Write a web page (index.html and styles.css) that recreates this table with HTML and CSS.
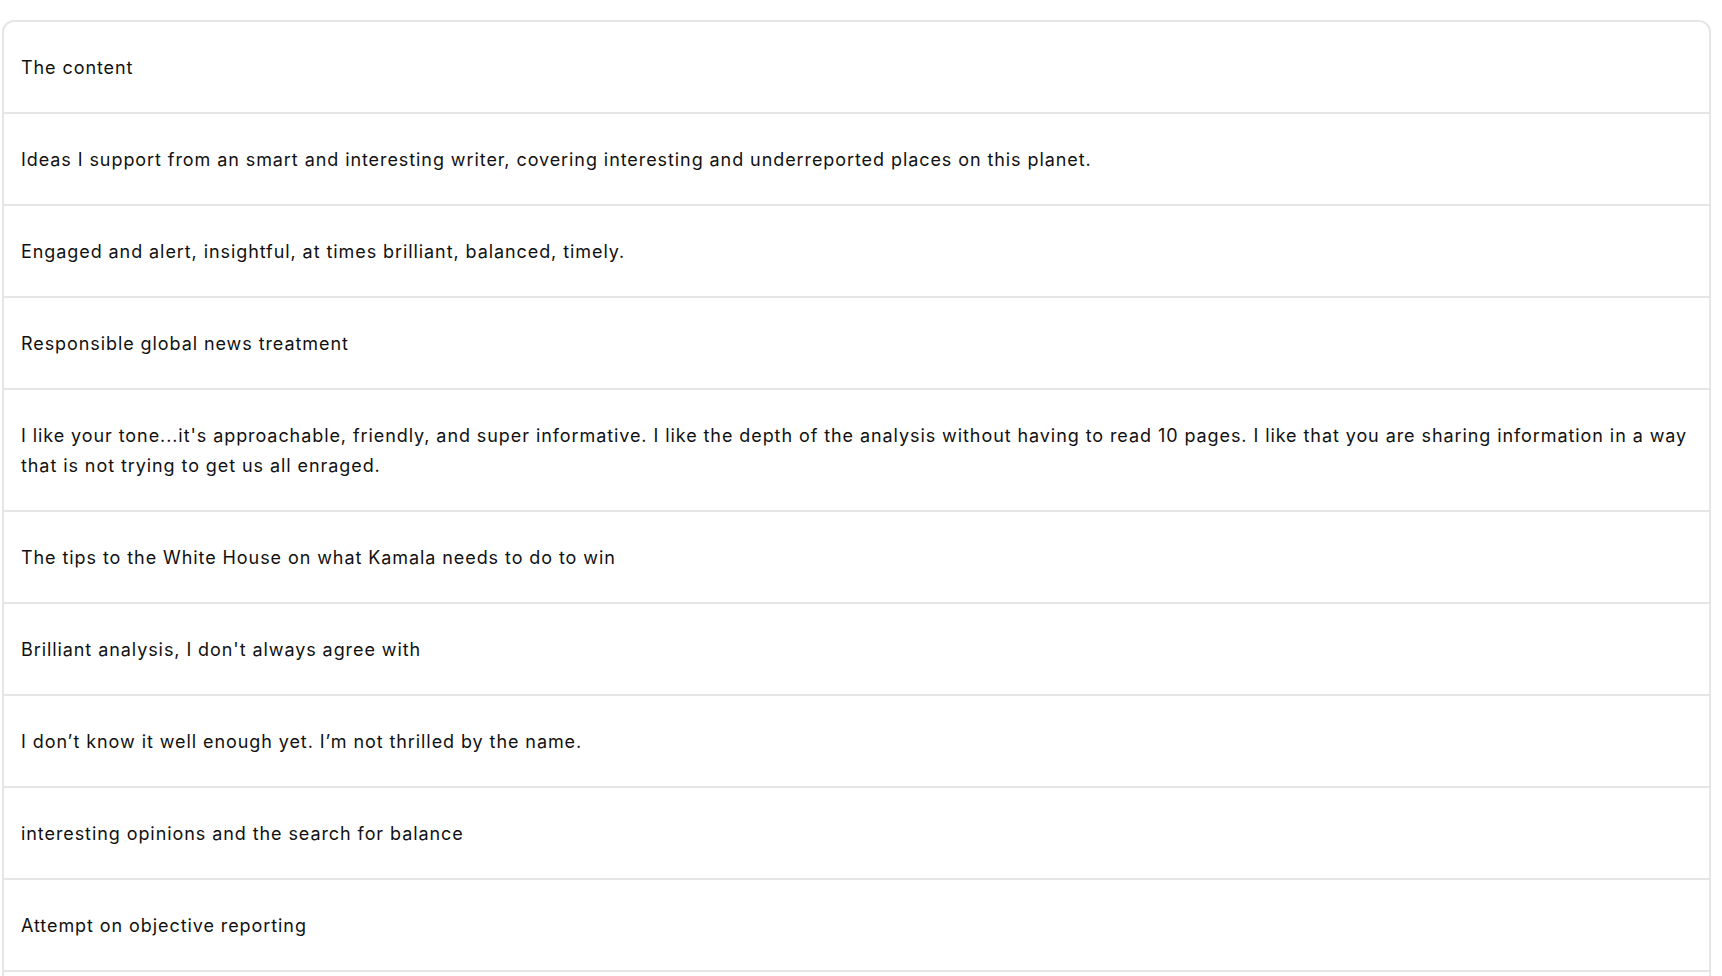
FILE: index.html
```html
<!DOCTYPE html>
<html lang="en">
<head>
<meta charset="utf-8">
<title>Responses</title>
<link rel="stylesheet" href="styles.css">
</head>
<body>
<div class="table">
  <div class="row">The content</div>
  <div class="row">Ideas I support from an smart and interesting writer, covering interesting and underreported places on this planet.</div>
  <div class="row">Engaged and alert, insightful, at times brilliant, balanced, timely.</div>
  <div class="row">Responsible global news treatment</div>
  <div class="row">I like your tone...it's approachable, friendly, and super informative. I like the depth of the analysis without having to read 10 pages. I like that you are sharing information in a way that is not trying to get us all enraged.</div>
  <div class="row">The tips to the White House on what Kamala needs to do to win</div>
  <div class="row">Brilliant analysis, I don't always agree with</div>
  <div class="row">I don’t know it well enough yet. I’m not thrilled by the name.</div>
  <div class="row">interesting opinions and the search for balance</div>
  <div class="row">Attempt on objective reporting</div>
  <div class="row row-empty"></div>
</div>
</body>
</html>
```

FILE: styles.css
```css
html, body {
  margin: 0;
  padding: 0;
  background: #ffffff;
}

body {
  padding: 20px 11px 0 2px;
  font-family: Inter, "Noto Sans", sans-serif;
  color: #111111;
  overflow: hidden;
}

.table {
  border: 2px solid #e6e6e6;
  border-radius: 12px;
  background: #ffffff;
}

.row {
  padding: 31px 8px 29px 17px;
  font-size: 18px;
  line-height: 30px;
  letter-spacing: 0.92px;
  border-top: 2px solid #e6e6e6;
}

.row:first-child {
  border-top: none;
}

.row-empty {
  min-height: 30px;
}
```
